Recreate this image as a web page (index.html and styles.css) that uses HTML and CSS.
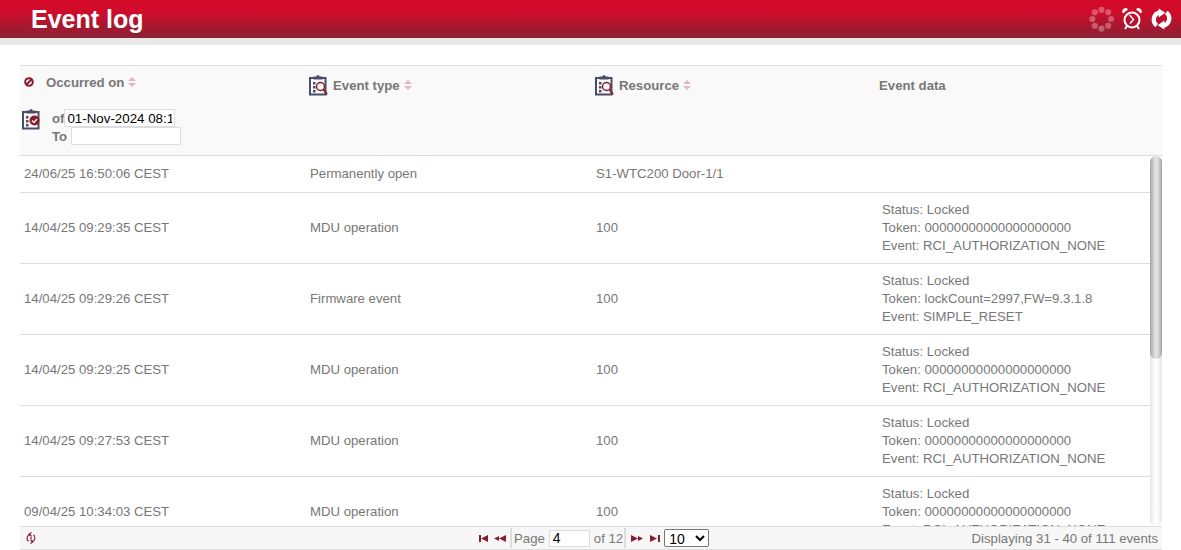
FILE: index.html
```html
<!DOCTYPE html>
<html lang="en">
<head>
  <meta charset="UTF-8" />
  <title>Event log</title>
  <link rel="stylesheet" href="styles.css">
</head>
<body>

  <svg class="defs" width="0" height="0">
    <symbol id="clip" viewBox="0 0 18 22">
      <path d="M1 4h15.500v16.500H1z" fill="none" stroke="#4b4e63" stroke-width="2"/>
      <path d="M4.500 2.500h3a1.500 1.500 0 0 1 3 0h3v3h-9z" fill="#4b4e63"/>
      <path d="M4 8h2.500v2.500H4zM4 12h2.500v2.500H4zM4 16h2.500v2.500H4z" fill="#4b4e63"/>
    </symbol>
  </svg>

  <header class="topbar">
    <h1>Event log</h1>
    <div class="topbar-icons">
      <svg class="spinner" width="25" height="26" viewBox="0 0 26 26" fill="#fff">
        <circle cx="13" cy="3.500" r="3.200"/><circle cx="20" cy="6" r="3.200"/><circle cx="23" cy="13" r="3.200"/><circle cx="20" cy="20" r="3.200"/>
        <circle cx="13" cy="23" r="3.200"/><circle cx="6" cy="20" r="3.200"/><circle cx="3.500" cy="13" r="3.200"/><circle cx="6" cy="6" r="3.200"/>
      </svg>
      <svg width="20" height="24" viewBox="0 0 20 24" fill="none" stroke="#fff">
        <circle cx="10" cy="13" r="7.500" stroke-width="2"/>
        <path d="M7.500 8l4 4.500-3.500 4" stroke-width="1.500"/>
        <path d="M1 6.500a3.200 3.200 0 0 1 5-4zM19 6.500a3.200 3.200 0 0 0-5-4z" fill="#fff" stroke="none"/>
        <path d="M5 19l-2 3M15 19l2 3" stroke-width="2"/>
      </svg>
      <svg width="23" height="22" viewBox="0 0 24 22" fill="none" stroke="#fff" stroke-width="4.500">
        <path d="M10 4A7.800 7.800 0 0 0 7 17.800"/>
        <path d="M14 18A7.800 7.800 0 0 0 17 4.200"/>
        <path d="M9 0l7 4.500-7 5zM15 22l-7-4.500 7-5z" fill="#fff" stroke="none"/>
      </svg>
    </div>
  </header>

  <main class="grid">
    <div class="grid-head">
      <div class="col-first">
        <div class="col-title">
          <svg class="clear-icon" width="10" height="10" viewBox="0 0 10 10" fill="none" stroke="#8a1c30" stroke-width="2">
            <circle cx="5" cy="5" r="3.800"/><path d="M2.500 7.500l5-5"/>
          </svg>
          <span>Occurred on</span><span class="sort"></span>
        </div>
        <div class="date-filter">
          <svg class="check-clip" width="18" height="22">
            <use href="#clip"/>
            <circle cx="12.500" cy="12.500" r="5" fill="#8a1c30"/>
            <path d="M10 12.500l2 2 3-3.500" fill="none" stroke="#fff" stroke-width="1.300"/>
          </svg>
          <div class="date-fields">
            <label class="date-of">of<input type="text" value="01-Nov-2024 08:15"></label>
            <label class="date-to">To<input type="text"></label>
          </div>
        </div>
      </div>
      <div class="col-title col-filter">
        <svg class="find-clip" width="19" height="22"><use href="#clip" width="18" height="22"/><circle cx="11.500" cy="12.500" r="4" fill="#f9f9f9" stroke="#8a1c30" stroke-width="1.500"/><path d="M14.500 15.500l3.500 5" stroke="#8a1c30" stroke-width="2"/></svg>
        <span>Event type</span><span class="sort"></span>
      </div>
      <div class="col-title col-filter">
        <svg class="find-clip" width="19" height="22"><use href="#clip" width="18" height="22"/><circle cx="11.500" cy="12.500" r="4" fill="#f9f9f9" stroke="#8a1c30" stroke-width="1.500"/><path d="M14.500 15.500l3.500 5" stroke="#8a1c30" stroke-width="2"/></svg>
        <span>Resource</span><span class="sort"></span>
      </div>
      <div class="col-title col-data">Event data</div>
    </div>

    <div class="grid-view">
      <div class="grid-body">
        <div class="row row-short">
          <div>24/06/25 16:50:06 CEST</div><div>Permanently open</div><div>S1-WTC200 Door-1/1</div><div></div>
        </div>
        <div class="row">
          <div>14/04/25 09:29:35 CEST</div><div>MDU operation</div><div>100</div>
          <div class="data">Status: Locked<br>Token: 00000000000000000000<br>Event: RCI_AUTHORIZATION_NONE</div>
        </div>
        <div class="row">
          <div>14/04/25 09:29:26 CEST</div><div>Firmware event</div><div>100</div>
          <div class="data">Status: Locked<br>Token: lockCount=2997,FW=9.3.1.8<br>Event: SIMPLE_RESET</div>
        </div>
        <div class="row">
          <div>14/04/25 09:29:25 CEST</div><div>MDU operation</div><div>100</div>
          <div class="data">Status: Locked<br>Token: 00000000000000000000<br>Event: RCI_AUTHORIZATION_NONE</div>
        </div>
        <div class="row">
          <div>14/04/25 09:27:53 CEST</div><div>MDU operation</div><div>100</div>
          <div class="data">Status: Locked<br>Token: 00000000000000000000<br>Event: RCI_AUTHORIZATION_NONE</div>
        </div>
        <div class="row">
          <div>09/04/25 10:34:03 CEST</div><div>MDU operation</div><div>100</div>
          <div class="data">Status: Locked<br>Token: 00000000000000000000<br>Event: RCI_AUTHORIZATION_NONE</div>
        </div>
      </div>
      <div class="scroll-track"><div class="scroll-thumb"></div></div>
    </div>

    <footer class="pager">
      <div class="pager-left">
        <svg width="12" height="12" viewBox="0 0 12 12" fill="none" stroke="#8a1c30" stroke-width="1.200">
          <path d="M5.500 2.300A3.900 3.900 0 0 0 3.500 9.200M6.500 9.700A3.900 3.900 0 0 0 8.500 2.800"/>
          <path d="M6.500 .5L4 2.300 6.500 4M5.500 11.500L8 9.700 5.500 8"/>
          <path d="M6 4.500v3"/>
        </svg>
      </div>
      <div class="pager-mid">
        <svg class="nav-first" width="11" height="7" viewBox="0 0 11 7" fill="#8a1c30"><path d="M1 0h2v7H1zM3 3.500L10 0v7z"/></svg>
        <svg width="12" height="7" viewBox="0 0 12 7" fill="#8a1c30"><path d="M0 3.500L5 1v5zM5 3.500L12 0v7z"/></svg>
        <span class="sep"></span>
        <span class="page-label">Page</span>
        <input class="page-input" type="text" value="4">
        <span class="page-total">of 12</span>
        <span class="sep"></span>
        <svg class="nav-next" width="12" height="7" viewBox="0 0 12 7" fill="#8a1c30"><path d="M0 0l7 3.500L0 7zM7 1l5 2.500L7 6z"/></svg>
        <svg class="nav-last" width="11" height="7" viewBox="0 0 11 7" fill="#8a1c30"><path d="M0 0l7 3.500L0 7zM8 0h2v7H8z"/></svg>
        <select class="page-size"><option>10</option><option>20</option><option>50</option></select>
      </div>
      <div class="pager-right">Displaying 31 - 40 of 111 events</div>
    </footer>
  </main>

</body>
</html>
```

FILE: styles.css
```css
body {
  margin: 0;
  background: #fff;
  color: #777;
  font-family: "Liberation Sans", Arial, sans-serif;
  font-size: 13.2px;
  overflow: hidden;
}

.defs {
  display: block;
  height: 0;
}

.topbar {
  display: flex;
  justify-content: space-between;
  align-items: center;
  height: 38px;
  border-bottom: 7px solid #e8e8e8;
  background: linear-gradient(to bottom, #d40a2a 0%, #d00b2a 30%, #892233 100%);
}

.topbar h1 {
  margin: 0 0 0 31px;
  color: #fff;
  font-size: 25px;
  font-weight: bold;
}

.topbar-icons {
  display: flex;
  align-items: center;
  gap: 8px;
  padding-right: 8px;
}

.spinner {
  opacity: 0.3;
}

.grid {
  margin: 20px 19px 0 20px;
}

.grid-head {
  display: grid;
  grid-template-columns: 286px 286px 286px 1fr;
  height: 89px;
  border-top: 1px solid #ddd;
  border-bottom: 1px solid #ddd;
  background: #f9f9f9;
}

.col-title {
  display: flex;
  align-items: center;
  height: 22px;
  font-weight: bold;
}

.col-first .col-title {
  margin-top: 5px;
}

.clear-icon {
  margin: 0 12px 0 4px;
}

.col-filter {
  margin-top: 8px;
  padding-left: 3px;
}

.find-clip {
  margin-right: 5px;
}

.col-data {
  margin-top: 8px;
  padding-left: 1px;
}

.sort {
  position: relative;
  width: 8px;
  height: 10px;
  margin-left: 4px;
}

.sort::before,
.sort::after {
  content: "";
  position: absolute;
  left: 0;
  border-left: 4px solid transparent;
  border-right: 4px solid transparent;
}

.sort::before {
  top: 0;
  border-bottom: 4px solid #dfb9c1;
}

.sort::after {
  top: 6px;
  border-top: 4px solid #dfb9c1;
}

.date-filter {
  display: flex;
  margin-top: 15px;
  padding-left: 2px;
}

.check-clip {
  margin-right: 12px;
}

.date-fields {
  margin-top: 1px;
  font-weight: bold;
}

.date-fields label {
  display: flex;
  height: 18px;
  align-items: center;
}

.date-fields input {
  box-sizing: border-box;
  height: 18px;
  padding: 0 2px;
  border: 1px solid #ddd;
  background: #fff;
  color: #000;
  font-family: inherit;
  font-size: 13.33px;
  outline: none;
}

.date-of input {
  width: 111px;
}

.date-to input {
  width: 110px;
  margin-left: 4px;
}

.grid-view {
  position: relative;
}

.grid-body {
  height: 370px;
  overflow: hidden;
}

.scroll-track {
  position: absolute;
  top: 0;
  right: 0;
  width: 12px;
  height: 370px;
  border-radius: 6px;
  background: linear-gradient(to right, #e6e6e6, #fdfdfd 40%, #fdfdfd 60%, #e6e6e6);
}

.scroll-thumb {
  height: 203px;
  border-radius: 6px;
  background: linear-gradient(to right, #a4a4a4, #dedede 40%, #e4e4e4 60%, #a4a4a4);
}

.row {
  display: grid;
  grid-template-columns: 286px 286px 286px 1fr;
  align-items: center;
  border-bottom: 1px solid #ddd;
}

.row > div {
  padding-left: 4px;
  padding-bottom: 2px;
}

.row-short {
  height: 36px;
}

.row .data {
  padding-top: 8px;
  padding-bottom: 8px;
  line-height: 18px;
}

.pager {
  display: grid;
  grid-template-columns: 458px 1fr auto;
  align-items: center;
  height: 22px;
  border-top: 1px solid #ddd;
  border-bottom: 1px solid #ddd;
  background: #f7f7f7;
}

.pager-left {
  display: flex;
  padding-left: 5px;
}

.pager-mid {
  display: flex;
  align-items: center;
}

.sep {
  width: 2px;
  height: 20px;
  background: #ddd;
}

.nav-first {
  margin-right: 5px;
}

.nav-first + svg {
  margin-right: 4px;
}

.page-label {
  margin: 0 4px 0 2px;
}

.page-total {
  margin: 0 1px 0 4px;
}

.nav-next {
  margin-left: 5px;
}

.nav-last {
  margin: 0 3px 0 7px;
}

.page-input {
  box-sizing: border-box;
  width: 41px;
  height: 17px;
  padding: 0 3px;
  border: 1px solid #ddd;
  color: #000;
  font-family: inherit;
  font-size: 14px;
}

.page-size {
  width: 45px;
  height: 18px;
  font-family: inherit;
  font-size: 14px;
}

.pager-right {
  padding-right: 4px;
  white-space: nowrap;
}
```
